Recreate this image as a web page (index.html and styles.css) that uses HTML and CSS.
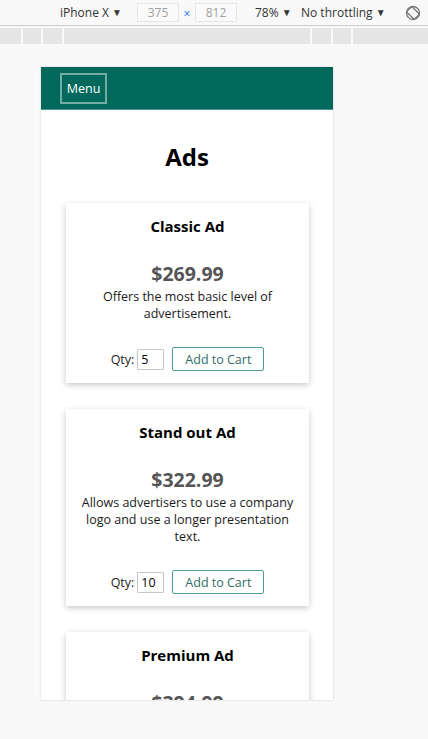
FILE: index.html
```html
<!DOCTYPE html>
<html>
<head>
<meta charset="utf-8">
<link rel="stylesheet" href="styles.css">
</head>
<body>
<div class="toolbar">
  <span class="tb-device">iPhone X <span class="caret">▼</span></span>
  <span class="tb-box">375</span>
  <span class="tb-x">×</span>
  <span class="tb-box">812</span>
  <span class="tb-zoom">78% <span class="caret">▼</span></span>
  <span class="tb-throttle">No throttling <span class="caret">▼</span></span>
  <svg class="tb-rotate" width="16" height="16" viewBox="0 0 16 16">
    <circle cx="8" cy="8" r="6.5" fill="none" stroke="#777" stroke-width="1.3"/>
    <rect x="4.2" y="2.6" width="7.6" height="10.8" rx="1" transform="rotate(-45 8 8)" fill="none" stroke="#777" stroke-width="1.3"/>
  </svg>
</div>
<div class="ruler">
  <span class="seg s1"></span><span class="seg s2"></span><span class="seg s3"></span><span class="seg s4"></span><span class="seg s5"></span><span class="seg s6"></span><span class="seg s7"></span>
</div>
<div class="stage">
  <div class="device">
    <header class="nav">
      <button class="menu-btn">Menu</button>
    </header>
    <h1 class="page-title">Ads</h1>
    <div class="card">
      <h2 class="card-title">Classic Ad</h2>
      <div class="price">$269.99</div>
      <p class="desc">Offers the most basic level of advertisement.</p>
      <div class="qty-row">
        <label class="qty-label">Qty:</label>
        <span class="qty-input">5</span>
        <button class="add-btn">Add to Cart</button>
      </div>
    </div>
    <div class="card">
      <h2 class="card-title">Stand out Ad</h2>
      <div class="price">$322.99</div>
      <p class="desc">Allows advertisers to use a company logo and use a longer presentation text.</p>
      <div class="qty-row">
        <label class="qty-label">Qty:</label>
        <span class="qty-input">10</span>
        <button class="add-btn">Add to Cart</button>
      </div>
    </div>
    <div class="card">
      <h2 class="card-title">Premium Ad</h2>
      <div class="price">$394.99</div>
      <p class="desc">Same benefits as Standout Ad, but also puts the advertisement at the top of the results.</p>
      <div class="qty-row">
        <label class="qty-label">Qty:</label>
        <span class="qty-input">1</span>
        <button class="add-btn">Add to Cart</button>
      </div>
    </div>
  </div>
</div>
</body>
</html>
```
FILE: styles.css
```css
html, body {
  margin: 0;
  padding: 0;
}
body {
  width: 428px;
  height: 739px;
  overflow: hidden;
  background: #f9f9f9;
  font-family: "Open Sans", "Noto Sans", sans-serif;
}
.toolbar {
  height: 26px;
  box-sizing: border-box;
  border-bottom: 1px solid #cccccc;
  background: #f9f9f9;
  display: flex;
  align-items: center;
  font-size: 12px;
  color: #333;
  padding-left: 60px;
}
.caret {
  font-size: 10px;
  position: relative;
  top: -1px;
}
.tb-device {
  width: 77px;
}
.tb-box {
  box-sizing: border-box;
  width: 42px;
  height: 19px;
  border: 1px solid #e6e6e6;
  color: #a0a0a0;
  text-align: center;
  line-height: 17px;
  background: #fafafa;
}
.tb-x {
  width: 16px;
  text-align: center;
  color: #1a73e8;
  font-size: 12px;
  position: relative;
  top: 1px;
}
.tb-zoom {
  margin-left: 18px;
  width: 46px;
}
.tb-throttle {
  width: 104px;
}
.tb-rotate {
  display: block;
}
.ruler {
  margin-top: 2px;
  height: 16px;
  display: flex;
  gap: 2px;
}
.seg {
  background: #e5e5e5;
  height: 16px;
  display: block;
}
.s1 { width: 21px; }
.s2 { width: 18px; }
.s3 { width: 19px; }
.s4 { width: 246px; }
.s5 { width: 19px; }
.s6 { width: 18px; }
.s7 { flex: 1; }
.stage {
  padding-top: 23px;
  padding-left: 41px;
}
.device {
  width: 292px;
  height: 633px;
  overflow: hidden;
  background: #ffffff;
  box-shadow: 0 0 2px rgba(0, 0, 0, 0.18);
}
.nav {
  height: 43px;
  box-sizing: border-box;
  background: #00695c;
  border-bottom: 1px solid #4d968d;
  padding: 6px 0 0 19px;
}
.menu-btn {
  box-sizing: border-box;
  width: 47px;
  height: 31px;
  background: transparent;
  border: 2px solid rgba(255, 255, 255, 0.45);
  color: #ffffff;
  font-family: "Open Sans", "Noto Sans", sans-serif;
  font-size: 12.5px;
  padding: 0;
  display: block;
}
.page-title {
  margin: 31px 0 30px;
  text-align: center;
  font-size: 24px;
  line-height: 32px;
  font-weight: 700;
  color: #000;
}
.card {
  margin: 0 24px 26px 25px;
  box-shadow: 0 2px 6px rgba(0, 0, 0, 0.22);
  background: #fff;
  padding: 13px 10px 12px;
  display: flex;
  flex-direction: column;
  align-items: center;
  text-align: center;
}
.card-title {
  margin: 0;
  font-size: 15px;
  line-height: 20px;
  font-weight: 700;
  color: #000;
}
.price {
  margin-top: 26px;
  font-size: 19.5px;
  line-height: 24px;
  font-weight: 700;
  color: #555555;
}
.desc {
  margin: 2px 0 0;
  font-size: 12.5px;
  line-height: 17px;
  color: #1a1a1a;
}
.qty-row {
  margin-top: 25px;
  display: flex;
  align-items: center;
  font-size: 12.5px;
  color: #222;
}
.qty-label {
  margin-right: 3px;
}
.qty-input {
  box-sizing: border-box;
  width: 27px;
  height: 21px;
  border: 1px solid #c8c8c8;
  border-radius: 1px;
  text-align: left;
  padding-left: 3px;
  line-height: 19px;
  color: #000;
  margin-right: 8px;
}
.add-btn {
  box-sizing: border-box;
  height: 24px;
  width: 92px;
  padding: 0;
  background: #fff;
  border: 1px solid #4f9d93;
  border-radius: 2px;
  color: #2f6d66;
  font-family: "Open Sans", "Noto Sans", sans-serif;
  font-size: 12.5px;
}
```
